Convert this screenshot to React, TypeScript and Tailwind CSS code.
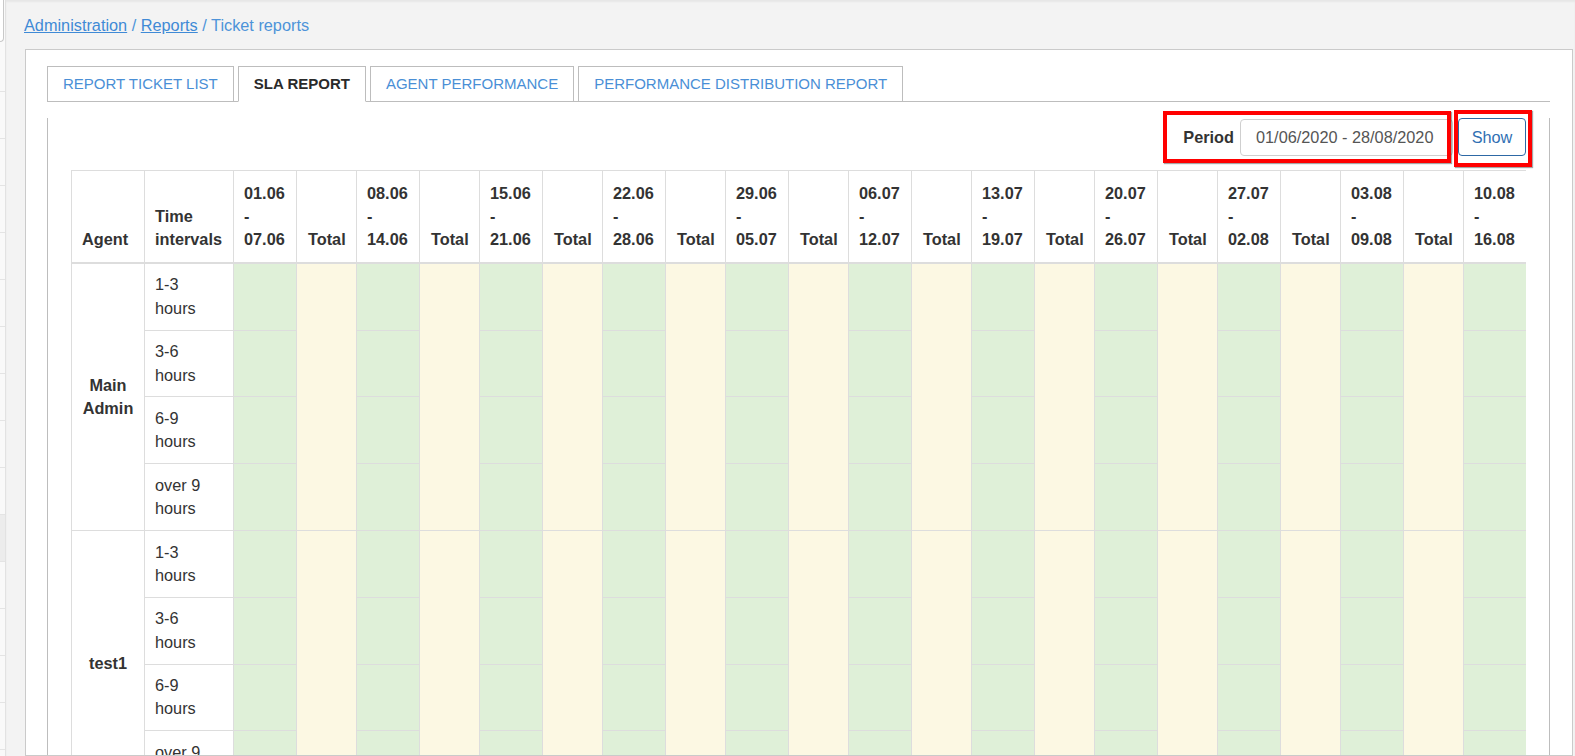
import React from 'react';

const weeks = [
  ['01.06', '07.06'],
  ['08.06', '14.06'],
  ['15.06', '21.06'],
  ['22.06', '28.06'],
  ['29.06', '05.07'],
  ['06.07', '12.07'],
  ['13.07', '19.07'],
  ['20.07', '26.07'],
  ['27.07', '02.08'],
  ['03.08', '09.08'],
  ['10.08', '16.08'],
  ['17.08', '23.08'],
  ['24.08', '28.08'],
];

const agents = [
  { name: ['Main', 'Admin'] },
  { name: ['test1'] },
];

const intervals = [
  ['1-3', 'hours'],
  ['3-6', 'hours'],
  ['6-9', 'hours'],
  ['over 9', 'hours'],
];

const tabs = [
  { label: 'REPORT TICKET LIST', active: false },
  { label: 'SLA REPORT', active: true },
  { label: 'AGENT PERFORMANCE', active: false },
  { label: 'PERFORMANCE DISTRIBUTION REPORT', active: false },
];

const Sidebar = () => (
  <div className="w-[6px] shrink-0 bg-[#f9f9f9] border-r border-[#e2e2e2] flex flex-col">
    <div className="h-[45px] shrink-0">
      <div className="h-[42px] w-[4px] bg-white border-r border-b border-[#c8c8c8] rounded-br-[4px]"></div>
    </div>
    {[...Array(15)].map((_, i) => (
      <div
        key={i}
        className={i === 10 ? 'h-[47px] shrink-0 border-b border-[#e4e4e4] bg-[#ececec]' : 'h-[47px] shrink-0 border-b border-[#e4e4e4]'}
      ></div>
    ))}
  </div>
);

const App = () => {
  return (
    <div className="h-[756px] w-[1575px] overflow-hidden flex bg-[#f3f3f3] text-[#333] font-['Liberation_Sans',Arial,sans-serif]">
      <Sidebar />

      <div className="flex-1 min-w-0 flex flex-col shadow-[inset_0_2px_2px_rgba(0,0,0,0.05)]">
        {/* Breadcrumb */}
        <div className="shrink-0 pl-[18px] pt-[14px] h-[49px] text-[16.3px] leading-[23.3px] text-[#4d93d9]">
          <a href="#" className="underline text-[#3f8ad6]">Administration</a>
          <span> / </span>
          <a href="#" className="underline text-[#3f8ad6]">Reports</a>
          <span> / Ticket reports</span>
        </div>

        {/* Outer panel */}
        <div className="ml-[19px] mr-[2px] flex-1 min-h-0 overflow-hidden bg-white border border-[#cacaca] pl-[21px] pr-[22px] pt-[16px]">
          {/* Tabs */}
          <div className="flex border-b border-[#bdbdbd]">
            {tabs.map((tab) => (
              <div
                key={tab.label}
                className={
                  tab.active
                    ? 'mr-[4px] -mb-px h-[36px] flex items-center px-[15px] border border-[#bdbdbd] border-b-white bg-white text-[15px] font-bold text-[#2a2a2a]'
                    : 'mr-[4px] -mb-px h-[36px] flex items-center px-[15px] border border-[#bdbdbd] bg-white text-[15px] text-[#4a8fd6]'
                }
              >
                {tab.label}
              </div>
            ))}
          </div>

          {/* Tab pane */}
          <div className="border-l border-r border-b border-[#bdbdbd] px-[23px] pb-[40px] min-h-[700px]">
            {/* Controls */}
            <div className="relative mt-[16px] h-[38px] flex items-center justify-end">
              <span className="mr-[6px] text-[16.3px] font-bold text-[#333]">Period</span>
              <div className="h-[37px] w-[213px] border border-[#cfcfcf] rounded-[4px] pl-[15px] flex items-center text-[16.3px] text-[#555]">
                01/06/2020 - 28/08/2020
              </div>
              <button className="ml-[5px] h-[38px] w-[68px] border border-[#2d68a5] rounded-[4px] bg-white text-[16.3px] text-[#2f6fb3]">
                Show
              </button>

              {/* Annotation boxes */}
              <div className="absolute right-[75px] top-[-7px] w-[288px] h-[52px] border-[4px] border-[#ff0000] shadow-[1px_1px_1px_rgba(0,0,0,0.35)] pointer-events-none"></div>
              <div className="absolute right-[-6px] top-[-8px] w-[78px] h-[57px] border-[4px] border-[#ff0000] shadow-[1px_1px_1px_rgba(0,0,0,0.35)] pointer-events-none"></div>
            </div>

            {/* SLA table */}
            <div className="mt-[14px] overflow-hidden">
              <table className="table-fixed border-separate border-spacing-0 w-[1762px] text-[16.3px] leading-[23.3px] text-[#333]">
                <thead>
                  <tr>
                    <th className="w-[74px] border-l border-t border-r border-b-2 border-[#ddd] px-[10px] pt-[10.5px] pb-[10.5px] align-bottom text-left font-bold">
                      Agent
                    </th>
                    <th className="w-[89px] border-t border-r border-b-2 border-[#ddd] px-[10px] pt-[10.5px] pb-[10.5px] align-bottom text-left font-bold">
                      Time
                      <br />
                      intervals
                    </th>
                    {weeks.map(([from, to]) => (
                      <React.Fragment key={from}>
                        <th className="w-[63px] border-t border-r border-b-2 border-[#ddd] px-[10px] pt-[10.5px] pb-[10.5px] align-bottom text-left font-bold">
                          {from}
                          <br />-<br />
                          {to}
                        </th>
                        <th className="w-[60px] border-t border-r border-b-2 border-[#ddd] px-[11px] pt-[10.5px] pb-[10.5px] align-bottom text-left font-bold">
                          Total
                        </th>
                      </React.Fragment>
                    ))}
                  </tr>
                </thead>
                <tbody>
                  {agents.map((agent) =>
                    intervals.map(([a, b], rowIndex) => (
                      <tr key={agent.name.join(' ') + rowIndex}>
                        {rowIndex === 0 && (
                          <td
                            rowSpan={4}
                            className="border-l border-r border-b border-[#ddd] px-[10px] align-middle text-center font-bold"
                          >
                            {agent.name.map((part, i) => (
                              <div key={i}>{part}</div>
                            ))}
                          </td>
                        )}
                        <td className="border-r border-b border-[#ddd] px-[10px] py-[9.6px] align-top">
                          {a}
                          <br />
                          {b}
                        </td>
                        {weeks.map(([from]) => (
                          <React.Fragment key={from}>
                            <td className="border-r border-b border-[#ddd] bg-[#dff0d8]"></td>
                            {rowIndex === 0 && (
                              <td rowSpan={4} className="border-r border-b border-[#ddd] bg-[#fcf8e3]"></td>
                            )}
                          </React.Fragment>
                        ))}
                      </tr>
                    ))
                  )}
                </tbody>
              </table>
            </div>
          </div>
        </div>
      </div>
    </div>
  );
};

export default App;
